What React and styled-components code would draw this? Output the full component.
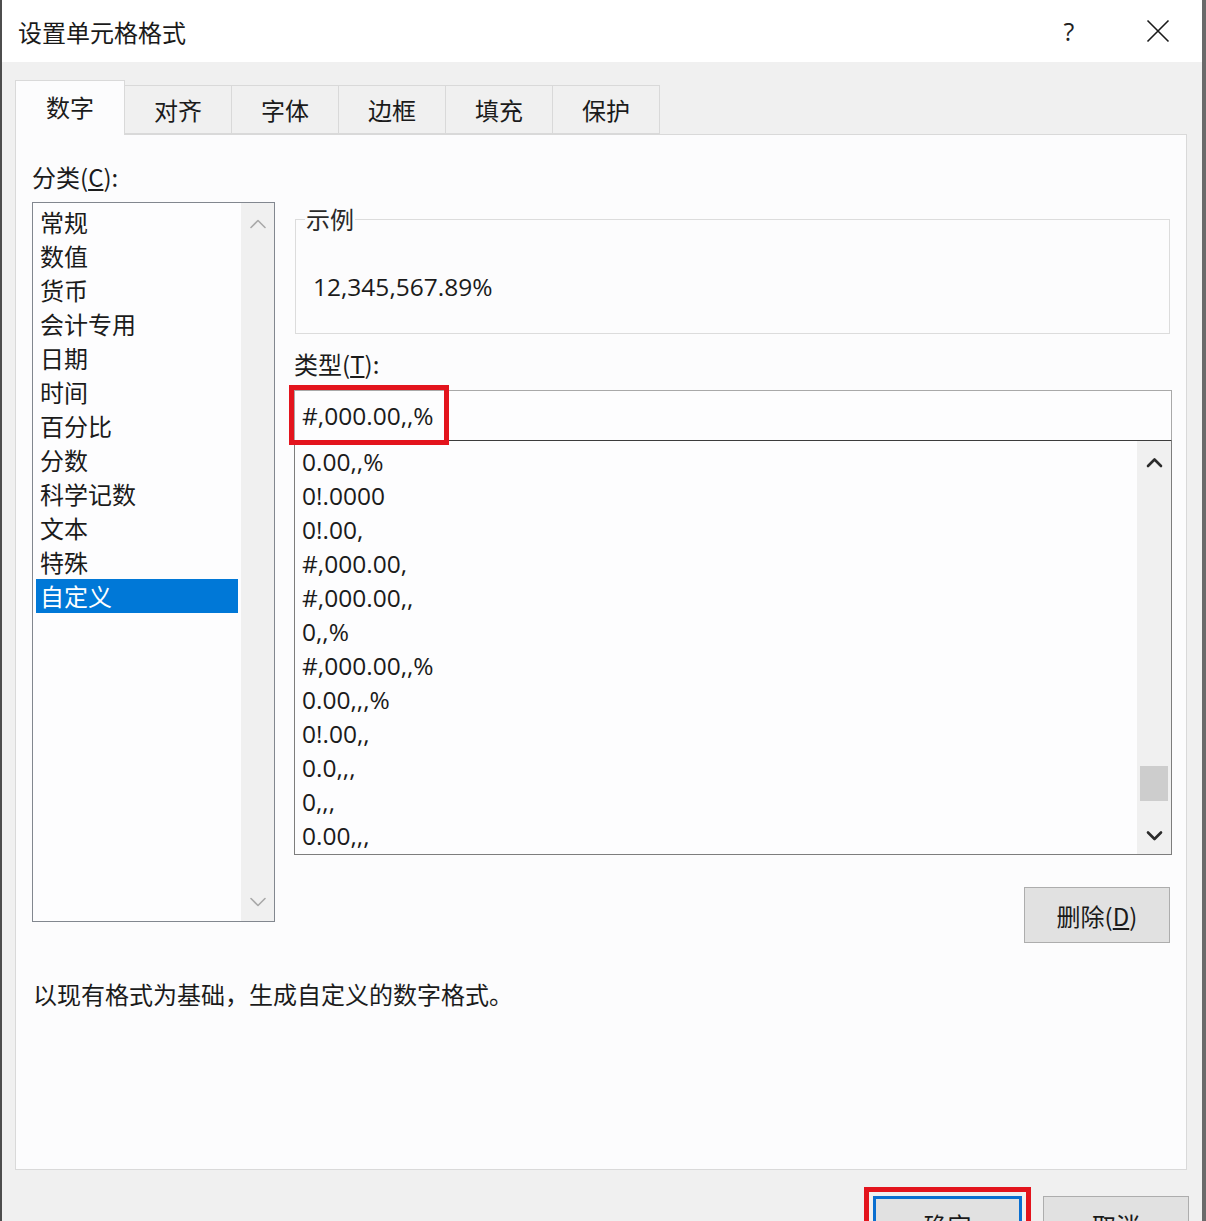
import styled, { createGlobalStyle } from "styled-components";

const GlobalStyle = createGlobalStyle`
    html, body {
        margin: 0;
        padding: 0;
        background: #f0f0f0;
    }
    body {
        font-family: "Open Sans", "Noto Sans CJK SC", sans-serif;
        color: #1b1b1b;
    }
    * { box-sizing: border-box; }
`

const Window = styled.div`
    width: 1206px;
    height: 1221px;
    overflow: hidden;
    display: flex;
    flex-direction: column;
    background: #f0f0f0;
    border-left: 2px solid #4d4d4d;
    border-right: 4px solid #6a6a6a;
`

const TitleBar = styled.div`
    height: 62px;
    flex-shrink: 0;
    display: flex;
    align-items: center;
    background: #ffffff;
    padding-left: 16px;
`

const Title = styled.div`
    flex: 1;
    font-family: "Noto Sans CJK SC", sans-serif;
    font-size: 24px;
    color: #1a1a1a;
`

const TitleButton = styled.div`
    width: ${p => p.$w}px;
    height: 62px;
    display: flex;
    align-items: center;
    justify-content: center;
    font-size: 25px;
    color: #222;
`

const Body = styled.div`
    padding: 18px 0 0 13px;
`

const TabRow = styled.div`
    display: flex;
    align-items: flex-end;
    height: 54px;
`

const Tab = styled.div`
    position: relative;
    z-index: ${p => p.$active ? 1 : 0};
    height: ${p => p.$active ? 55 : 49}px;
    margin-bottom: ${p => p.$active ? -1 : 0}px;
    margin-left: ${p => p.$first ? 0 : -1}px;
    padding: 0 ${p => p.$active ? 30 : 29}px;
    display: flex;
    align-items: center;
    background: ${p => p.$active ? "#fcfcfd" : "#f0f0f0"};
    border: 1px solid #d9d9d9;
    border-bottom: ${p => p.$active ? "none" : "1px solid #d9d9d9"};
    font-family: "Noto Sans CJK SC", sans-serif;
    font-size: 24px;
    padding-bottom: ${p => p.$active ? 4 : 0}px;
`

const Panel = styled.div`
    width: 1172px;
    height: 1036px;
    background: #fcfcfd;
    border: 1px solid #d9d9d9;
    padding: 25px 14px 0 16px;
`

const Columns = styled.div`
    display: grid;
    grid-template-columns: 243px 1fr;
    column-gap: 19px;
    align-items: start;
`

const Column = styled.div`
    display: flex;
    flex-direction: column;
`

const Label = styled.div`
    font-family: "Noto Sans CJK SC", sans-serif;
    font-size: 24px;
    line-height: 34px;
    margin-top: ${p => p.$mt || 0}px;
`

const ListBox = styled.div`
    display: flex;
    height: ${p => p.$h}px;
    margin-top: ${p => p.$mt || 0}px;
    border: 1px solid ${p => p.$border || "#82878f"};
    border-top: ${p => p.$noTop ? "none" : `1px solid ${p.$border || "#82878f"}`};
    background: #fdfdfe;
`

const Items = styled.div`
    flex: 1;
    padding: ${p => p.$pad};
    display: flex;
    flex-direction: column;
`

const Item = styled.div`
    height: 34px;
    line-height: 34px;
    padding-left: ${p => p.$pl}px;
    font-family: ${p => p.$cjk ? `"Noto Sans CJK SC", sans-serif` : `"Open Sans", "Noto Sans CJK SC", sans-serif`};
    font-size: ${p => p.$cjk ? 24 : 24.5}px;
    white-space: nowrap;
    background: ${p => p.$selected ? "#0078d7" : "transparent"};
    color: ${p => p.$selected ? "#ffffff" : "#1b1b1b"};
`

const ScrollBar = styled.div`
    width: ${p => p.$w}px;
    display: flex;
    flex-direction: column;
    background: #f0f0f0;
`

const ScrollArrow = styled.div`
    height: ${p => p.$h}px;
    display: flex;
    align-items: center;
    justify-content: center;
    flex-shrink: 0;
`

const Track = styled.div`
    flex: 1;
    display: flex;
    flex-direction: column;
    justify-content: flex-end;
    padding: 0 3px 17px 3px;
`

const Thumb = styled.div`
    height: 35px;
    background: #cdcdcd;
`

const SampleBox = styled.fieldset`
    margin: 44px 2px 0 1px;
    padding: 36px 0 29px 17px;
    border: 1px solid #dcdcdc;
    min-width: 0;
`

const Legend = styled.legend`
    margin-left: -8px;
    padding: 0 1px;
    font-family: "Noto Sans CJK SC", sans-serif;
    font-size: 24px;
    line-height: 30px;
    color: #2a2a2a;
`

const SampleText = styled.div`
    font-size: 24.5px;
    line-height: 34px;
`

const TypeInput = styled.div`
    position: relative;
    height: 51px;
    margin-top: 9px;
    display: flex;
    align-items: center;
    padding-left: 7px;
    border: 1px solid #a9a9a9;
    border-bottom: 1px solid #3c3c3c;
    background: #fdfdfe;
    font-size: 24.5px;
`

const Highlight = styled.div`
    position: absolute;
    left: -6px;
    top: -6px;
    width: 160px;
    height: 60px;
    border: 5px solid #e3141d;
    pointer-events: none;
`

const Button = styled.div`
    width: ${p => p.$w}px;
    height: 56px;
    display: flex;
    align-items: center;
    justify-content: center;
    background: #e1e1e1;
    border: ${p => p.$default ? "3px solid #0a6fd0" : "1px solid #adadad"};
    font-family: "Noto Sans CJK SC", sans-serif;
    font-size: 24px;
    color: #1a1a1a;
    outline: ${p => p.$marked ? "5px solid #e3141d" : "none"};
    outline-offset: 4px;
`

const DeleteRow = styled.div`
    display: flex;
    justify-content: flex-end;
    margin-top: 32px;
    padding-right: 2px;
`

const Description = styled.div`
    margin-top: 34px;
    padding-left: 1px;
    font-family: "Noto Sans CJK SC", sans-serif;
    font-size: 24px;
    line-height: 34px;
`

const ButtonRow = styled.div`
    display: flex;
    justify-content: flex-end;
    gap: 21px;
    margin-top: 26px;
    padding-right: 13px;
`

function Chevron({ up, color, width = 14, stroke = 2.4 }) {
    return (
        <svg width={width + 4} height={width / 2 + 5} viewBox={`0 0 ${width + 4} ${width / 2 + 5}`}>
            <polyline
                points={up
                    ? `2,${width / 2 + 2.5} ${width / 2 + 2},2.5 ${width + 2},${width / 2 + 2.5}`
                    : `2,2.5 ${width / 2 + 2},${width / 2 + 2.5} ${width + 2},2.5`}
                fill="none"
                stroke={color}
                strokeWidth={stroke}
                strokeLinecap="round"
                strokeLinejoin="round"
            />
        </svg>
    )
}

const tabs = ["数字", "对齐", "字体", "边框", "填充", "保护"];
const categories = ["常规", "数值", "货币", "会计专用", "日期", "时间", "百分比", "分数", "科学记数", "文本", "特殊", "自定义"];
const formats = ["0.00,,%", "0!.0000", "0!.00,", "#,000.00,", "#,000.00,,", "0,,%", "#,000.00,,%", "0.00,,,%", "0!.00,,", "0.0,,,", "0,,,", "0.00,,,"];

export default function App() {
    return <>
        <GlobalStyle />
        <Window>
            <TitleBar>
                <Title>设置单元格格式</Title>
                <TitleButton $w={90}>?</TitleButton>
                <TitleButton $w={88}>
                    <svg width="24" height="24" viewBox="0 0 24 24">
                        <path d="M1.5 1.5 L22.5 22.5 M22.5 1.5 L1.5 22.5" stroke="#1a1a1a" strokeWidth="1.6" fill="none" />
                    </svg>
                </TitleButton>
            </TitleBar>
            <Body>
                <TabRow>
                    {tabs.map((t, i) => (
                        <Tab key={t} $active={i === 0} $first={i === 0}>{t}</Tab>
                    ))}
                </TabRow>
                <Panel>
                    <Columns>
                        <Column>
                            <Label>分类(<u>C</u>):</Label>
                            <ListBox $h={720} $mt={8}>
                                <Items $pad="2px 3px">
                                    {categories.map(c => (
                                        <Item key={c} $cjk $pl={4} $selected={c === "自定义"}>{c}</Item>
                                    ))}
                                </Items>
                                <ScrollBar $w={33}>
                                    <ScrollArrow $h={42}><Chevron up color="#a9a9a9" stroke={1.6} /></ScrollArrow>
                                    <Track />
                                    <ScrollArrow $h={38}><Chevron color="#a9a9a9" stroke={1.6} /></ScrollArrow>
                                </ScrollBar>
                            </ListBox>
                        </Column>
                        <Column>
                            <SampleBox>
                                <Legend>示例</Legend>
                                <SampleText>12,345,567.89%</SampleText>
                            </SampleBox>
                            <Label $mt={13}>类型(<u>T</u>):</Label>
                            <TypeInput>
                                #,000.00,,%
                                <Highlight />
                            </TypeInput>
                            <ListBox $h={414} $noTop $border="#7d7d7d">
                                <Items $pad="4px 0 0 0">
                                    {formats.map(f => (
                                        <Item key={f} $pl={7}>{f}</Item>
                                    ))}
                                </Items>
                                <ScrollBar $w={34}>
                                    <ScrollArrow $h={44}><Chevron up color="#2b2b2b" width={13} stroke={2.6} /></ScrollArrow>
                                    <Track><Thumb /></Track>
                                    <ScrollArrow $h={36}><Chevron color="#2b2b2b" width={13} stroke={2.6} /></ScrollArrow>
                                </ScrollBar>
                            </ListBox>
                            <DeleteRow>
                                <Button $w={146}>删除(<u>D</u>)</Button>
                            </DeleteRow>
                        </Column>
                    </Columns>
                    <Description>以现有格式为基础，生成自定义的数字格式。</Description>
                </Panel>
            </Body>
            <ButtonRow>
                <Button $w={149} $default $marked>确定</Button>
                <Button $w={146}>取消</Button>
            </ButtonRow>
        </Window>
    </>
}
